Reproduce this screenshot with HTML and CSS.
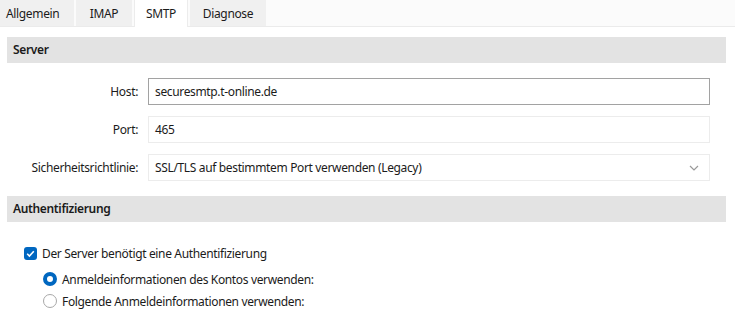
FILE: index.html
```html
<!DOCTYPE html>
<html lang="de">
<head>
  <meta charset="UTF-8">
  <title>Kontoeinstellungen – SMTP</title>
  <link rel="stylesheet" href="styles.css">
</head>
<body>
  <!-- Reiter -->
  <div class="tabs">
    <div class="tab first">Allgemein</div>
    <div class="tab">IMAP</div>
    <div class="tab active">SMTP</div>
    <div class="tab">Diagnose</div>
  </div>

  <div class="page">
    <!-- Server -->
    <div class="section-head">Server</div>
    <div class="form">
      <label class="label">Host:</label>
      <div class="field focused">securesmtp.t-online.de</div>

      <label class="label">Port:</label>
      <div class="field">465</div>

      <label class="label">Sicherheitsrichtlinie:</label>
      <div class="field select">
        <span>SSL/TLS auf bestimmtem Port verwenden (Legacy)</span>
        <svg class="chevron" width="10" height="6" viewBox="0 0 10 6">
          <path d="M1 1 L5 5 L9 1" fill="none" stroke="#9a9a9a" stroke-width="1.2" />
        </svg>
      </div>
    </div>

    <!-- Authentifizierung -->
    <div class="section-head">Authentifizierung</div>
    <div class="auth">
      <div class="option">
        <span class="check">
          <svg width="13" height="13" viewBox="0 0 13 13">
            <path d="M3.2 6.8 L5.4 9 L9.8 4.3" fill="none" stroke="#fff" stroke-width="1.6" />
          </svg>
        </span>
        Der Server benötigt eine Authentifizierung
      </div>
      <div class="option sub">
        <span class="radio on"></span>
        Anmeldeinformationen des Kontos verwenden:
      </div>
      <div class="option sub second">
        <span class="radio"></span>
        Folgende Anmeldeinformationen verwenden:
      </div>
    </div>
  </div>
</body>
</html>
```

FILE: styles.css
```css
/* Grundlayout */
html, body { margin: 0; padding: 0; background: #fff; }
body { font-family: "Noto Sans", "Open Sans", sans-serif; font-size: 12px; letter-spacing: -0.35px; color: #1b1b1b; }

/* Reiterleiste */
.tabs { display: flex; gap: 2px; height: 26px; background: #fbfbfb; border-bottom: 1px solid #ebebeb; }
.tab { display: flex; align-items: center; justify-content: center; background: #f0f0f0; }
.tab:nth-child(1) { width: 74px; justify-content: flex-start; padding-left: 6px; box-sizing: border-box; }
.tab:nth-child(2) { width: 56px; }
.tab:nth-child(4) { width: 76px; }
.tab.active { width: 54px; background: #fff; border-left: 1px solid #ececec; border-right: 1px solid #ececec; margin-bottom: -1px; height: 27px; box-sizing: border-box; }

/* Inhalt */
.page { padding: 10px 9px 0 7px; }
.section-head { height: 26px; line-height: 26px; padding-left: 6px; background: #e3e3e3; font-weight: 600; color: #1a1a1a; }

.form { display: grid; grid-template-columns: 131px 562px; column-gap: 10px; row-gap: 11px; padding: 15px 0 15px 0; align-items: center; }
.label { text-align: right; }
.field { height: 25px; line-height: 25px; border: 1px solid #ececec; padding: 0 6px; }
.field.focused { border-color: #a2a2a2; }
.select { display: flex; justify-content: space-between; align-items: center; }
.chevron { margin-right: 4px; }

/* Optionen */
.auth { padding: 20px 0 0 17px; }
.option { display: flex; align-items: center; gap: 5px; height: 22px; }
.option.sub { padding-left: 19px; margin-top: 4px; }
.option.sub.second { margin-top: 0; }
.check { width: 13px; height: 13px; border-radius: 3px; background: #0067c0; display: inline-flex; }
.radio { width: 12px; height: 12px; border-radius: 50%; border: 1px solid #a8a8a8; background: #fff; box-sizing: content-box; }
.radio.on { border: 4px solid #0067c0; width: 6px; height: 6px; }
```
